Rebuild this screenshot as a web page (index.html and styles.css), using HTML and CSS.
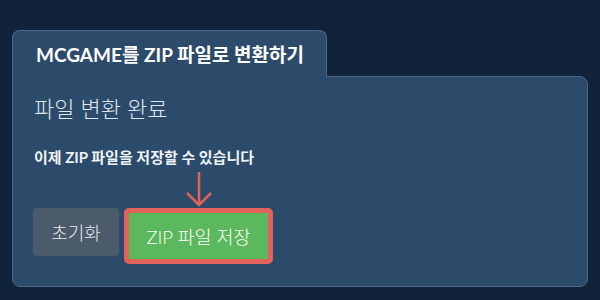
FILE: index.html
```html
<!DOCTYPE html>
<html lang="ko">
<head>
  <meta charset="UTF-8" />
  <title>MCGAME를 ZIP 파일로 변환하기</title>
  <link rel="stylesheet" href="styles.css">
</head>
<body>
  <div class="converter">
    <div class="tab">MCGAME를 ZIP 파일로 변환하기</div>
    <div class="panel">
      <h2 class="done-title">파일 변환 완료</h2>
      <p class="done-text">이제 ZIP 파일을 저장할 수 있습니다</p>
      <div class="actions">
        <button class="btn btn-reset">초기화</button>
        <div class="highlight">
          <svg class="arrow" width="30" height="36" viewBox="0 0 30 36">
            <path d="M15 1 V34 M3 22 L15 34 L27 22" fill="none" stroke="#e0625a" stroke-width="2.5" />
          </svg>
          <button class="btn btn-save">ZIP 파일 저장</button>
        </div>
      </div>
    </div>
  </div>
</body>
</html>
```

FILE: styles.css
```css
body {
  margin: 0;
  background-color: #10233a;
  font-family: Lato, "Noto Sans CJK KR", sans-serif;
  width: 600px;
  height: 300px;
}

.converter {
  padding: 30px 12px 0 12px;
}

.tab {
  display: inline-block;
  box-sizing: border-box;
  height: 47px;
  padding: 0 22px 0 23px;
  line-height: 48px;
  background-color: #2c4a6a;
  border: 1px solid #4b6889;
  border-bottom: none;
  border-radius: 8px 8px 0 0;
  color: #ffffff;
  font-size: 19px;
  font-weight: bold;
  position: relative;
  z-index: 1;
  margin-bottom: -1px;
}

.panel {
  box-sizing: border-box;
  height: 211px;
  background-color: #2c4a6a;
  border: 1px solid #4b6889;
  border-radius: 0 8px 8px 8px;
  padding: 17px 20px 0 20px;
}

.done-title {
  margin: 0 0 0 1px;
  font-size: 22px;
  font-weight: 300;
  color: #dfe6ee;
  line-height: 30px;
}

.done-text {
  margin: 22px 0 0 1px;
  font-size: 15px;
  font-weight: bold;
  color: #eef2f6;
}

.actions {
  display: flex;
  align-items: flex-start;
  gap: 5px;
  margin-top: 41px;
}

.btn {
  border: none;
  font-family: Lato, "Noto Sans CJK KR", sans-serif;
  font-size: 18px;
  font-weight: 300;
  color: #ffffff;
  border-radius: 4px;
  cursor: pointer;
}

.btn-reset {
  width: 86px;
  height: 48px;
  background-color: #4b5b6c;
  color: #e6eaee;
}

.highlight {
  position: relative;
  border: 5px solid #e0625a;
  border-radius: 5px;
}

.btn-save {
  display: block;
  width: 139px;
  height: 46px;
  background-color: #5cb85c;
  border-radius: 0;
  font-size: 18.5px;
}

.arrow {
  position: absolute;
  left: 55px;
  top: -42px;
}
```
